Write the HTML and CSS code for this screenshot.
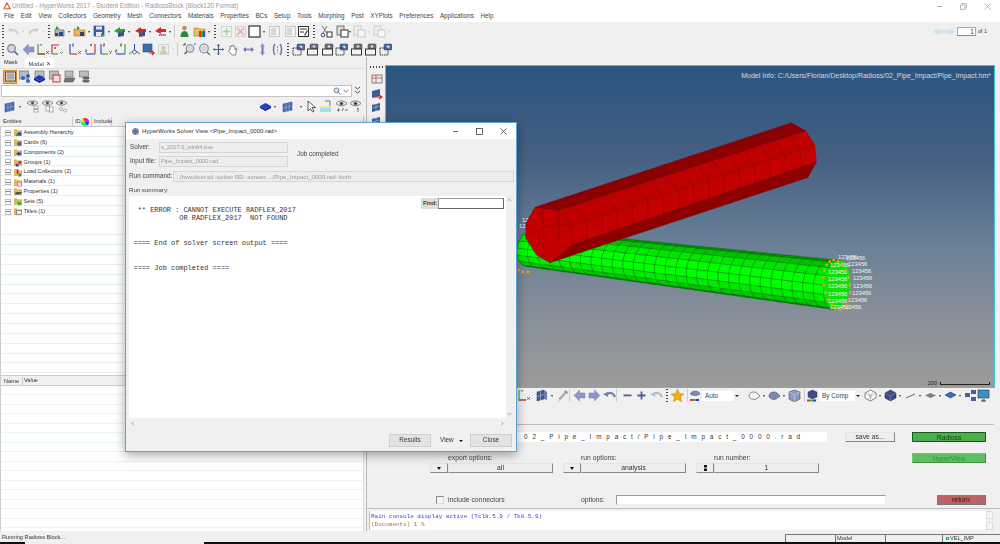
FILE: index.html
```html
<!DOCTYPE html>
<html lang="en">
<head>
<meta charset="utf-8">
<title>HyperWorks 2017</title>
<link rel="stylesheet" href="styles.css">
</head>
<body>
<svg class="sprite" width="0" height="0">
  <defs>
    <symbol id="undo" viewBox="0 0 13 13"><path d="M11 9C9 5 6 4 3 6" fill="none" stroke="#cfcfcf" stroke-width="2"/><path d="M1 4l4-1-1 5z" fill="#cfcfcf"/></symbol>
    <symbol id="redo" viewBox="0 0 13 13"><path d="M2 9c2-4 5-5 8-3" fill="none" stroke="#cfcfcf" stroke-width="2"/><path d="M12 4L8 3l1 5z" fill="#cfcfcf"/></symbol>
    <symbol id="folderg" viewBox="0 0 13 13"><path d="M2 4h4l1 1h4v6H2z" fill="#b0b8b0" stroke="#555" stroke-width=".6"/><path d="M3 1l3 2-3 2z" fill="#2fa52f"/><rect x="6" y="7" width="4" height="4" fill="#1f4fa0"/><rect x="2" y="8" width="3" height="3" fill="#444"/></symbol>
    <symbol id="foldero" viewBox="0 0 13 13"><path d="M1 4h4l1 1h6v6H1z" fill="#e9b556" stroke="#a87a20" stroke-width=".6"/><path d="M4 1l3 2-3 2z" fill="#2fa52f"/><rect x="7" y="7" width="4" height="4" fill="#3a3a8a"/></symbol>
    <symbol id="save" viewBox="0 0 13 13"><rect x="1" y="1" width="10" height="10" fill="#3d5fa8" stroke="#223b70" stroke-width=".6"/><rect x="3" y="1.500" width="6" height="3" fill="#dfe6f2"/><rect x="3" y="7" width="6" height="4" fill="#e9e9e9"/><path d="M8 8l4 2-4 2z" fill="#2fa52f"/></symbol>
    <symbol id="garrow" viewBox="0 0 13 13"><path d="M1 6l6-4v2h5v3H7v2z" fill="#2f9e2f"/><path d="M5 8l6-2v5l-6 1z" fill="#3f4f8f"/></symbol>
    <symbol id="rarrow" viewBox="0 0 13 13"><path d="M1 6l6-4v2h5v3H7v2z" fill="#d22a2a"/><path d="M5 8l6-2v5l-6 1z" fill="#3f4f8f"/></symbol>
    <symbol id="rarrowp" viewBox="0 0 13 13"><path d="M1 6l6-4v2h5v3H7v2z" fill="#d22a2a"/><path d="M5 10h7" stroke="#555" stroke-width="1.500" stroke-dasharray="1.500 .6"/></symbol>
    <symbol id="person" viewBox="0 0 13 13"><circle cx="6.500" cy="3" r="2.300" fill="#c88d45"/><path d="M2.500 12c0-4 1.500-6 4-6s4 2 4 6z" fill="#2b8a3a"/></symbol>
    <symbol id="rainbow" viewBox="0 0 13 13"><path d="M1 3h4l1 1h6v7H1z" fill="#e9c060" stroke="#a87a20" stroke-width=".6"/><rect x="6" y="6" width="2" height="6" fill="#e03030"/><rect x="8" y="6" width="2" height="6" fill="#30b030"/><rect x="10" y="6" width="2" height="6" fill="#3050e0"/></symbol>
    <symbol id="docplus" viewBox="0 0 13 13"><rect x="1.500" y="1.500" width="10" height="10" fill="#eef4ee" stroke="#cfd6cf"/><path d="M6.500 3v7M3 6.500h7" stroke="#a8d0a8" stroke-width="1.500"/></symbol>
    <symbol id="docx" viewBox="0 0 13 13"><rect x="1.500" y="1.500" width="10" height="10" fill="#f4eeee" stroke="#d6cfcf"/><path d="M3 3l7 7M10 3l-7 7" stroke="#e0a8a8" stroke-width="1.500"/></symbol>
    <symbol id="square" viewBox="0 0 13 13"><rect x="1" y="1" width="11" height="11" fill="#fff" stroke="#333" stroke-width="1.200"/></symbol>
    <symbol id="panel" viewBox="0 0 13 13"><rect x="1.500" y="1.500" width="10" height="10" fill="#f2f2f2" stroke="#c9c9c9"/><rect x="3" y="3" width="5" height="7" fill="#d8d8d8"/></symbol>
    <symbol id="note" viewBox="0 0 13 13"><rect x="1.500" y="1.500" width="10" height="10" fill="#fff" stroke="#333"/><path d="M3 4h7M3 7h4" stroke="#333"/><path d="M7 10l3-5 1 1-3 5z" fill="#555"/></symbol>
    <symbol id="scissors" viewBox="0 0 13 13"><path d="M2 1l5 7M7 1L3 8" stroke="#777" stroke-width="1"/><circle cx="3" cy="10" r="1.800" fill="none" stroke="#447"/><rect x="7" y="7" width="5" height="5" fill="#fff" stroke="#333"/></symbol>
    <symbol id="paste" viewBox="0 0 13 13"><rect x="1" y="1" width="7" height="9" fill="#ddd" stroke="#777"/><rect x="5" y="5" width="7" height="7" fill="#fff" stroke="#333"/></symbol>
    <symbol id="fadepaste" viewBox="0 0 13 13"><rect x="1" y="1" width="7" height="9" fill="#eee" stroke="#ccc"/><rect x="5" y="5" width="7" height="7" fill="#f8f8f8" stroke="#c8c8c8"/></symbol>
    <symbol id="mag" viewBox="0 0 13 13"><circle cx="5.500" cy="5.500" r="3.800" fill="#cfd8e4" stroke="#7a8796" stroke-width="1.300"/><path d="M8.500 8.500l3.500 3.500" stroke="#666" stroke-width="1.600"/></symbol>
    <symbol id="left" viewBox="0 0 13 13"><path d="M1 6.500L6.500 1v3H12v5H6.500v3z" fill="#8f95c6" stroke="#7a80ad" stroke-width=".5"/></symbol>
    <symbol id="right" viewBox="0 0 13 13"><path d="M12 6.500L6.500 1v3H1v5h5.500v3z" fill="#8f95c6" stroke="#7a80ad" stroke-width=".5"/></symbol>
    <symbol id="axyx" viewBox="0 0 13 13"><path d="M2 1v10h7" fill="none" stroke="#2ba02b" stroke-width="1.100"/><path d="M2 11h7" stroke="#d22" stroke-width="1.100"/><path d="M10 8l3 3M13 8l-3 3M4 1l1 1.500L6 1" stroke="#333" stroke-width=".6" fill="none"/></symbol>
    <symbol id="axxy" viewBox="0 0 13 13"><path d="M2 11V2h7" fill="none" stroke="#d22" stroke-width="1.100"/><path d="M2 11h6" stroke="#2ba02b" stroke-width="1.100"/><path d="M10 9l1.500 1.500L13 9M4 4l2 2M6 4L4 6" stroke="#333" stroke-width=".6" fill="none"/></symbol>
    <symbol id="axzx" viewBox="0 0 13 13"><path d="M2 1v10" stroke="#2a3fd0" stroke-width="1.100"/><path d="M2 11h7" stroke="#d22" stroke-width="1.100"/><path d="M4 1h2L4 3h2M10 8l3 3M13 8l-3 3" stroke="#333" stroke-width=".6" fill="none"/></symbol>
    <symbol id="axxz" viewBox="0 0 13 13"><path d="M11 1v10" stroke="#d22" stroke-width="1.100"/><path d="M2 11h9" stroke="#2a3fd0" stroke-width="1.100"/><path d="M6 1l2 2M8 1L6 3M1 7h2L1 9h2" stroke="#333" stroke-width=".6" fill="none"/></symbol>
    <symbol id="axzy" viewBox="0 0 13 13"><path d="M2 1v10" stroke="#2a3fd0" stroke-width="1.100"/><path d="M2 11h7" stroke="#2ba02b" stroke-width="1.100"/><path d="M4 1h2L4 3h2M10 8l1.500 1.500L13 8M11.500 9.500V11" stroke="#333" stroke-width=".6" fill="none"/></symbol>
    <symbol id="axyz" viewBox="0 0 13 13"><path d="M11 1v10" stroke="#2ba02b" stroke-width="1.100"/><path d="M2 11h9" stroke="#2a3fd0" stroke-width="1.100"/><path d="M6 1h2L6 3h2M1 7h2L1 9h2" stroke="#333" stroke-width=".6" fill="none"/></symbol>
    <symbol id="iso" viewBox="0 0 13 13"><path d="M6.500 1v6" stroke="#2a3fd0"/><path d="M6.500 7L1 11" stroke="#2ba02b"/><path d="M6.500 7L12 11" stroke="#d22"/><circle cx="6.500" cy="9" r="2" fill="none" stroke="#2a8a8a" stroke-width=".8"/></symbol>
    <symbol id="bluered" viewBox="0 0 13 13"><rect x="1" y="1" width="9" height="8" fill="#3c6da8" stroke="#264d80" stroke-width=".6"/><path d="M7 10h5M10 8l2 2-2 2" stroke="#d22" stroke-width="1.200" fill="none"/></symbol>
    <symbol id="fadeperson" viewBox="0 0 13 13"><rect x="1.500" y="1.500" width="10" height="10" fill="#e8eee8" stroke="#cdd6cd"/><circle cx="6.500" cy="5" r="2" fill="#bcd0bc"/><path d="M3 11c0-3 1.500-4 3.500-4s3.500 1 3.500 4z" fill="#d6c8a8"/></symbol>
    <symbol id="zoomplus" viewBox="0 0 13 13"><circle cx="7" cy="5.500" r="3.800" fill="#d8dde4" stroke="#7a8796" stroke-width="1.100"/><path d="M4 8.500L1.500 11" stroke="#555" stroke-width="1.400"/><path d="M1 3V1h2M11 1h2" stroke="#444" fill="none"/></symbol>
    <symbol id="zoomring" viewBox="0 0 13 13"><circle cx="6" cy="5.500" r="4.300" fill="none" stroke="#8a95a6" stroke-width="1.300"/><circle cx="6" cy="5.500" r="2" fill="#dfe3ea" stroke="#9aa4b2" stroke-width=".6"/><path d="M9 9l3 3" stroke="#777" stroke-width="1.500"/></symbol>
    <symbol id="cross" viewBox="0 0 13 13"><path d="M6.500 1v11M1 6.500h11" stroke="#4f5f8f" stroke-width="1.200"/><path d="M6.500 1L5 3h3zM6.500 12L5 10h3zM1 6.500L3 5v3zM12 6.500L10 5v3z" fill="#4f5f8f"/></symbol>
    <symbol id="hand" viewBox="0 0 13 13"><path d="M3 7V3.500c1-.5 1 0 1 .5V3c1-1 1.500 0 1.500 0V2.500c1-.5 1.200 0 1.200.5V3.500c1-.5 1.300 0 1.300.5v3l1-1.500c1-.5 1 .5.800 1L8.500 12H5L2 8.500c-.3-1 .5-1.500 1-1.500z" fill="#fff" stroke="#555" stroke-width=".7"/></symbol>
    <symbol id="horiz" viewBox="0 0 13 13"><path d="M1 6.500L4 4v5zM12 6.500L9 4v5z" fill="#6a74b0"/><rect x="4" y="5.500" width="5" height="2" fill="#8f95c6"/></symbol>
    <symbol id="vert" viewBox="0 0 13 13"><path d="M6.500 0L4 4h5zM6.500 13L4 9h5z" fill="#8f95c6"/><rect x="5.500" y="4" width="2" height="5" fill="#6a74b0"/></symbol>
    <symbol id="braces" viewBox="0 0 13 13"><path d="M4 1C2 3 2 10 4 12M9 1c2 2 2 9 0 11" fill="none" stroke="#6a74b0" stroke-width="1.500"/><path d="M6.500 3v7" stroke="#8f95c6" stroke-dasharray="2 1"/></symbol>
    <symbol id="cam" viewBox="0 0 13 13"><rect x="5" y="1" width="8" height="6" rx="1" fill="#4a6aa8" stroke="#333a66" stroke-width=".5"/><circle cx="9" cy="4" r="1.500" fill="#d8e0f0"/><rect x="1" y="5" width="8" height="7" fill="none" stroke="#333" stroke-width="1" stroke-dasharray="1.500 .7"/></symbol>
    <symbol id="cam2" viewBox="0 0 13 13"><rect x="4" y="1" width="8" height="5" rx="1" fill="#6b7280" stroke="#333" stroke-width=".5"/><circle cx="8" cy="3.500" r="1.300" fill="#dde"/><rect x="1.500" y="6" width="10" height="6" fill="#f3f3f3" stroke="#333"/></symbol>
    <symbol id="frontview" viewBox="0 0 13 13"><rect x="2" y="2" width="10" height="8" fill="#f2e8e8" stroke="#555" stroke-width=".7"/><path d="M2 5h10M6 2v8" stroke="#c33" stroke-width=".7"/></symbol>
    <symbol id="cubered" viewBox="0 0 13 13"><path d="M2 4l8-2v7l-8 2z" fill="#3f5a9a"/><path d="M5 10h6M9 8l3 2-3 2" stroke="#d22" stroke-width="1.200" fill="none"/></symbol>
    <symbol id="cube2" viewBox="0 0 13 13"><path d="M2 4l8-2v7l-8 2z" fill="#3f5a9a"/><path d="M2 7l8-2M6 3v7" stroke="#c9d2e6" stroke-width=".5"/></symbol>
    <symbol id="gbox" viewBox="0 0 13 13"><rect x="1.500" y="2" width="10" height="9" fill="#d8d8d8" stroke="#555"/><rect x="3" y="3.500" width="7" height="6" fill="#aaa"/></symbol>
    <symbol id="nodes" viewBox="0 0 13 13"><rect x="1.500" y="1" width="9" height="8" fill="#bbb" stroke="#666" stroke-width=".6"/><circle cx="5" cy="8" r="2" fill="#2e66c8"/><circle cx="10" cy="6" r="2" fill="#2e66c8"/><circle cx="10" cy="11" r="2" fill="#2e66c8"/></symbol>
    <symbol id="bluedisk" viewBox="0 0 13 13"><rect x="2" y="1" width="9" height="6" fill="#bbb" stroke="#666" stroke-width=".6"/><path d="M1 8l5.500-3L12 8l-5.500 3z" fill="#1c3cc8"/><path d="M1 8v2l5.500 3 5.500-3V8l-5.500 3z" fill="#12268c"/></symbol>
    <symbol id="matbox" viewBox="0 0 13 13"><rect x="1.500" y="1" width="9" height="8" fill="#bbb" stroke="#666" stroke-width=".6"/><rect x="5" y="5" width="7" height="7" fill="#f4dede" stroke="#c33"/></symbol>
    <symbol id="propbox" viewBox="0 0 13 13"><rect x="2" y="1" width="8" height="6" fill="#bbb" stroke="#666" stroke-width=".6"/><path d="M2 8h10l-2 4H1z" fill="#777" stroke="#444" stroke-width=".5"/></symbol>
    <symbol id="pile" viewBox="0 0 13 13"><rect x="1.500" y="1" width="9" height="6" fill="#bbb" stroke="#666" stroke-width=".6"/><ellipse cx="8" cy="8" rx="3.500" ry="1.500" fill="#666"/><ellipse cx="8" cy="11" rx="3.500" ry="1.500" fill="#666"/></symbol>
    <symbol id="compsheet" viewBox="0 0 13 13"><path d="M1 4l9-2v8l-9 2z" fill="#4a6db4" stroke="#2b4780" stroke-width=".5"/><path d="M4 3.500v8M7 3v8M1 8l9-2" stroke="#bcd" stroke-width=".4"/></symbol>
    <symbol id="eyec1" viewBox="0 0 13 13"><path d="M1 3c3-3 8-3 11 0-3 3-8 3-11 0z" fill="#d9dfe8" stroke="#555" stroke-width=".6"/><circle cx="6.500" cy="3" r="1.400" fill="#445"/><rect x="8" y="6" width="4" height="2.500" fill="#fff" stroke="#666" stroke-width=".5"/><rect x="8" y="9.500" width="4" height="2.500" fill="#fff" stroke="#666" stroke-width=".5"/></symbol>
    <symbol id="eyec2" viewBox="0 0 13 13"><path d="M1 3c3-3 8-3 11 0-3 3-8 3-11 0z" fill="#d9dfe8" stroke="#555" stroke-width=".6"/><circle cx="6.500" cy="3" r="1.400" fill="#445"/><rect x="5" y="6" width="3.500" height="5" fill="#fff" stroke="#666" stroke-width=".5"/><rect x="8.500" y="7" width="3.500" height="5" fill="#fff" stroke="#666" stroke-width=".5"/></symbol>
    <symbol id="eyec3" viewBox="0 0 13 13"><path d="M1 3c3-3 8-3 11 0-3 3-8 3-11 0z" fill="#d9dfe8" stroke="#555" stroke-width=".6"/><circle cx="6.500" cy="3" r="1.400" fill="#445"/><circle cx="6" cy="9" r="1.500" fill="#fff" stroke="#666" stroke-width=".5"/><circle cx="10" cy="10.500" r="1.500" fill="#fff" stroke="#666" stroke-width=".5"/></symbol>
    <symbol id="bluedia" viewBox="0 0 13 13"><path d="M1 6l5.500-3L12 6 6.500 9z" fill="#1c3cd8"/><path d="M1 6v2l5.500 3L12 8V6L6.500 9z" fill="#12268c"/></symbol>
    <symbol id="cursor" viewBox="0 0 13 13"><path d="M3 1v10l2.500-2.500L7.500 12l1.500-.8-2-3.700h3.500z" fill="#fff" stroke="#333" stroke-width=".8"/></symbol>
    <symbol id="highl" viewBox="0 0 13 13"><rect x="1" y="6" width="11" height="6" fill="#f3e98a"/><rect x="1" y="8" width="11" height="4" fill="#9fdff0"/><path d="M6 1h5v5" fill="none" stroke="#777"/></symbol>
    <symbol id="eyepm" viewBox="0 0 13 13"><path d="M1 3.500c3-3.500 8-3.500 11 0-3 3-8 3-11 0z" fill="#dfe6ee" stroke="#555" stroke-width=".7"/><circle cx="6.500" cy="3.500" r="1.600" fill="#334"/><path d="M2 10h3M3.500 8.500v3M7 11l1.500-3M10 10h3" stroke="#333" stroke-width=".7"/></symbol>
    <symbol id="eyeone" viewBox="0 0 13 13"><path d="M1 3.500c3-3.500 8-3.500 11 0-3 3-8 3-11 0z" fill="#dfe6ee" stroke="#555" stroke-width=".7"/><circle cx="6.500" cy="3.500" r="1.600" fill="#334"/><path d="M8 8.500l1-.5v4" stroke="#333" stroke-width=".7" fill="none"/></symbol>
    <symbol id="wrench" viewBox="0 0 13 13"><path d="M2 12l7-8" stroke="#aaa" stroke-width="2.400"/><path d="M8 2c2-1.500 4 0 4 2l-2 1-1.500-1.500z" fill="#999"/><circle cx="2.500" cy="11" r="1" fill="#fff"/></symbol>
    <symbol id="cubegrid" viewBox="0 0 13 13"><path d="M1 3l7-2v9l-7 2z" fill="#3e5a95" stroke="#2a3f70" stroke-width=".5"/><path d="M8 1l3 2v8l-3-1z" fill="#6f7fa8"/><path d="M4.500 2v9M1 7.500l7-2" stroke="#c9d2e6" stroke-width=".5"/></symbol>
    <symbol id="back" viewBox="0 0 13 13"><path d="M12 8C10 3 6 3 3 6" fill="none" stroke="#6f7fb0" stroke-width="2.200"/><path d="M0 5l5-2 0 5z" fill="#6f7fb0"/></symbol>
    <symbol id="backfade" viewBox="0 0 13 13"><path d="M12 8C10 3 6 3 3 6" fill="none" stroke="#b5bcd4" stroke-width="2.200"/><path d="M0 5l5-2 0 5z" fill="#b5bcd4"/></symbol>
    <symbol id="minus" viewBox="0 0 13 13"><rect x="2.500" y="5.500" width="8" height="1.800" fill="#4c5aa8"/></symbol>
    <symbol id="plus" viewBox="0 0 13 13"><path d="M6.500 2.500v8M2.500 6.500h8" stroke="#4c5aa8" stroke-width="1.800"/></symbol>
    <symbol id="star" viewBox="0 0 13 13"><path d="M6.500 0l2 4.500 4.500.5-3.400 3 1 4.700-4.100-2.400-4.100 2.400 1-4.700L0 5l4.500-.5z" fill="#e8b010" stroke="#a87a10" stroke-width=".4"/></symbol>
    <symbol id="autoic" viewBox="0 0 13 13"><path d="M1 5c2-4 9-4 10 0-3 2-7 2-10 0z" fill="#7a88b8" stroke="#445" stroke-width=".4"/><rect x="1" y="10" width="3" height="2" fill="#e33"/><rect x="4" y="10" width="3" height="2" fill="#3b3"/><rect x="7" y="10" width="3" height="2" fill="#33e"/></symbol>
    <symbol id="bycomp" viewBox="0 0 13 13"><path d="M2 3l4.500-2L11 3v5L6.500 10 2 8z" fill="#3d4f8a" stroke="#223" stroke-width=".4"/><rect x="1" y="10.500" width="3" height="2" fill="#e33"/><rect x="4" y="10.500" width="3" height="2" fill="#3b3"/><rect x="7" y="10.500" width="3" height="2" fill="#33e"/></symbol>
    <symbol id="shell" viewBox="0 0 13 13"><path d="M1 7c0-4 5-5 8-3l3 3-4 3c-3 1-6 0-7-3z" fill="#f6f6f6" stroke="#666" stroke-width=".8"/></symbol>
    <symbol id="shell2" viewBox="0 0 13 13"><path d="M1 7c0-4 5-5 8-3l3 3-4 3c-3 1-6 0-7-3z" fill="#7a8ab0" stroke="#445" stroke-width=".6"/></symbol>
    <symbol id="boxc" viewBox="0 0 13 13"><path d="M1 3l5.500-2L12 3v7l-5.500 3L1 10z" fill="#8a9ac0" stroke="#333" stroke-width=".5"/><path d="M1 3l5.500 3L12 3M6.500 6v7" stroke="#dde" stroke-width=".5" fill="none"/></symbol>
    <symbol id="wire" viewBox="0 0 13 13"><path d="M1 4l5.500-3L12 4v5l-5.500 3L1 9z" fill="#fff" stroke="#555" stroke-width=".7"/><path d="M1 4l5.500 3L12 4M6.500 7v5M3.500 2.500l5.500 8M9.500 2.500l-6 8" stroke="#888" stroke-width=".5" fill="none"/></symbol>
    <symbol id="solid" viewBox="0 0 13 13"><path d="M1 4l5.500-3L12 4v5l-5.500 3L1 9z" fill="#3a4a88" stroke="#223" stroke-width=".5"/><path d="M1 4l5.500 3L12 4M6.500 7v5" stroke="#99a" stroke-width=".5" fill="none"/></symbol>
    <symbol id="line1" viewBox="0 0 13 13"><path d="M2 9l9-4" stroke="#666" stroke-width="1"/></symbol>
    <symbol id="flat" viewBox="0 0 13 13"><path d="M1 6.500l5.500-2.500L12 6.500 6.500 9z" fill="#7a7f88"/></symbol>
    <symbol id="flatb" viewBox="0 0 13 13"><path d="M1 6l5.500-3L12 6 6.500 9z" fill="#2e6fd8" stroke="#223" stroke-width=".5"/></symbol>
    <symbol id="cubes" viewBox="0 0 13 13"><rect x="7" y="1" width="5" height="4" fill="#4a5fa0"/><rect x="1" y="4" width="5" height="4" fill="#4a5fa0"/><rect x="7" y="8" width="5" height="4" fill="#4a5fa0"/></symbol>
    <symbol id="monitor" viewBox="0 0 13 13"><rect x="1" y="1" width="11" height="8" fill="#3a8fc8" stroke="#333" stroke-width=".6"/><path d="M5 11h3M4 12h5" stroke="#333"/></symbol>
    <symbol id="fold" viewBox="0 0 9 9"><path d="M0 1.500h3l1 1h5V8H0z" fill="#e8b85c" stroke="#b08030" stroke-width=".4"/></symbol>
  </defs>
</svg>

<div class="app">
  <header class="titlebar">
    <svg class="applogo" viewBox="0 0 9 9"><path d="M4.500 1L8 7.500H1z" fill="none" stroke="#e04030" stroke-width="1.200"/><path d="M1 7.500h3" stroke="#e8b030" stroke-width="1.200"/></svg>
    <span class="titletext">Untitled - HyperWorks 2017 - Student Edition - RadiossBlock (Block120 Format)</span>
    <div class="winctl">
      <svg viewBox="0 0 9 9"><path d="M2 4.500h5" stroke="#aaa"/></svg>
      <svg viewBox="0 0 9 9"><path d="M1.500 3h4.500v4.500H1.500zM3 3V1.500h4.500V6H6" fill="none" stroke="#aaa" stroke-width=".8"/></svg>
      <svg viewBox="0 0 9 9"><path d="M1.500 1.500l6 6M7.500 1.500l-6 6" stroke="#aaa" stroke-width=".8"/></svg>
    </div>
  </header>

  <nav class="menubar">
    <span>File</span><span>Edit</span><span>View</span><span>Collectors</span><span>Geometry</span><span>Mesh</span><span>Connectors</span><span>Materials</span><span>Properties</span><span>BCs</span><span>Setup</span><span>Tools</span><span>Morphing</span><span>Post</span><span>XYPlots</span><span>Preferences</span><span>Applications</span><span>Help</span>
  </nav>

  <div class="toolbar tb1">
    <i class="dots"></i>
    <svg class="ic s3"><use href="#undo"/></svg><i class="ar fade"></i>
    <svg class="ic"><use href="#redo"/></svg><i class="ar fade"></i>
    <i class="dots s1"></i>
    <svg class="ic s3"><use href="#folderg"/></svg><i class="ar"></i>
    <svg class="ic"><use href="#foldero"/></svg><i class="ar"></i>
    <svg class="ic"><use href="#save"/></svg><i class="ar"></i>
    <svg class="ic"><use href="#garrow"/></svg><i class="ar"></i>
    <svg class="ic s1"><use href="#rarrow"/></svg><i class="ar"></i>
    <svg class="ic"><use href="#rarrowp"/></svg><i class="ar"></i>
    <i class="sep"></i>
    <svg class="ic s3"><use href="#person"/></svg>
    <svg class="ic s2"><use href="#rainbow"/></svg><i class="ar"></i>
    <i class="dots s1"></i>
    <svg class="ic s4"><use href="#docplus"/></svg>
    <svg class="ic s1"><use href="#docx"/></svg>
    <svg class="ic s1"><use href="#square"/></svg><i class="ar"></i>
    <svg class="ic"><use href="#panel"/></svg>
    <svg class="ic s3"><use href="#panel"/></svg>
    <svg class="ic"><use href="#note"/></svg>
    <i class="dots s3"></i>
    <svg class="ic s5"><use href="#scissors"/></svg>
    <svg class="ic s3"><use href="#paste"/></svg><i class="ar nar"></i>
    <svg class="ic"><use href="#fadepaste"/></svg><i class="ar fade"></i>
    <svg class="ic"><use href="#fadepaste"/></svg><i class="ar fade"></i>
    <div class="pager">
      <svg class="pagearrow" viewBox="0 0 11 9"><path d="M0 4.500L5 .5v2h6v4H5v2z" fill="#cfe4ee"/></svg>
      <svg class="pagearrow" viewBox="0 0 11 9"><path d="M11 4.500L6 .5v2H0v4h6v2z" fill="#cfe4ee"/></svg>
      <span class="pageinput">1</span><span class="pageof">of 1</span>
    </div>
  </div>

  <div class="toolbar tb2">
    <i class="dots"></i>
    <svg class="ic s2"><use href="#mag"/></svg>
    <svg class="ic s3"><use href="#left"/></svg>
    <svg class="ic s1"><use href="#axyx"/></svg>
    <svg class="ic s1"><use href="#axxy"/></svg>
    <svg class="ic s5"><use href="#axzx"/></svg>
    <svg class="ic s3"><use href="#axxz"/></svg>
    <svg class="ic s2"><use href="#axzy"/></svg>
    <svg class="ic s2"><use href="#axyz"/></svg>
    <svg class="ic s1"><use href="#iso"/></svg>
    <svg class="ic s1"><use href="#bluered"/></svg>
    <svg class="ic s2"><use href="#fadeperson"/></svg><i class="ar fade"></i>
    <i class="sep"></i>
    <svg class="ic s5"><use href="#zoomplus"/></svg>
    <svg class="ic s2"><use href="#zoomring"/></svg>
    <svg class="ic s1"><use href="#cross"/></svg>
    <svg class="ic s2"><use href="#hand"/></svg>
    <svg class="ic s2"><use href="#horiz"/></svg>
    <svg class="ic s1"><use href="#vert"/></svg>
    <svg class="ic s2"><use href="#braces"/></svg>
    <i class="dots s3"></i>
    <svg class="ic s3"><use href="#cam"/></svg>
    <svg class="ic s1"><use href="#cam2"/></svg>
    <svg class="ic s2"><use href="#cam2"/></svg>
    <svg class="ic s1"><use href="#cam"/></svg>
    <svg class="ic s2"><use href="#cam2"/></svg>
    <svg class="ic s1"><use href="#cam2"/></svg>
    <svg class="ic s2"><use href="#cam"/></svg>
  </div>

  <main class="main">
    <section class="leftpanel">
      <div class="tabs">
        <span class="tab">Mask</span>
        <span class="tab active">Model <b class="tabx">×</b></span>
      </div>
      <div class="pickrow">
        <span class="pick selected"><svg class="ic"><use href="#gbox"/></svg></span>
        <svg class="ic"><use href="#nodes"/></svg>
        <svg class="ic s1"><use href="#bluedisk"/></svg>
        <svg class="ic s1"><use href="#matbox"/></svg>
        <svg class="ic s1"><use href="#propbox"/></svg>
        <svg class="ic s1"><use href="#pile"/></svg>
      </div>
      <div class="searchrow">
        <div class="searchbox">
          <svg class="searchic" viewBox="0 0 9 9"><circle cx="3.800" cy="3.800" r="2.800" fill="#cfe0f0" stroke="#5a7aa0"/><path d="M6 6l2.500 2.500" stroke="#555"/></svg>
          <svg class="searchic" viewBox="0 0 9 9"><path d="M2 3l2.500 3L7 3" fill="none" stroke="#777"/></svg>
        </div>
        <svg class="dbl" viewBox="0 0 7 9"><path d="M1 1l2.500 2L6 1M1 5l2.500 2L6 5" fill="none" stroke="#555"/></svg>
      </div>
      <div class="entbar">
        <svg class="ic"><use href="#compsheet"/></svg><i class="ar"></i>
        <svg class="ic s2"><use href="#eyec1"/></svg>
        <svg class="ic s2"><use href="#eyec2"/></svg>
        <svg class="ic s1"><use href="#eyec3"/></svg>
        <span class="grow"></span>
        <svg class="ic"><use href="#bluedia"/></svg><i class="ar"></i>
        <svg class="ic s3"><use href="#compsheet"/></svg><i class="ar s3"></i>
        <svg class="ic"><use href="#cursor"/></svg>
        <svg class="ic s1"><use href="#highl"/></svg>
        <svg class="ic s3"><use href="#eyepm"/></svg>
        <svg class="ic s1"><use href="#eyeone"/></svg>
      </div>
      <div class="enthead">
        <span class="h-ent">Entities</span>
        <span class="h-id">ID</span>
        <span class="wheel"></span>
        <span class="h-inc">Include</span>
      </div>
      <ul class="tree">
        <li><i class="exp"></i><svg class="fic" viewBox="0 0 9 9"><use href="#fold" width="9" height="9"/><rect x="4" y="4.500" width="4" height="3.500" fill="#2a3fa0"/><rect x="2" y="6" width="3" height="2.500" fill="#3aa03a"/></svg>Assembly Hierarchy</li>
        <li><i class="exp"></i><svg class="fic" viewBox="0 0 9 9"><use href="#fold" width="9" height="9"/><circle cx="6" cy="6" r="2.500" fill="#666"/></svg>Cards (6)</li>
        <li><i class="exp"></i><svg class="fic" viewBox="0 0 9 9"><use href="#fold" width="9" height="9"/><path d="M2 6l3.500-2L9 6 5.500 8z" fill="#1c3cd8"/></svg>Components (2)</li>
        <li><i class="exp"></i><svg class="fic" viewBox="0 0 9 9"><use href="#fold" width="9" height="9"/><rect x="5" y="3" width="3" height="3" fill="#d22"/><rect x="2" y="6" width="3" height="3" fill="#2a3fa0"/></svg>Groups (1)</li>
        <li><i class="exp"></i><svg class="fic" viewBox="0 0 9 9"><use href="#fold" width="9" height="9"/><rect x="3" y="1" width="2" height="5" fill="#d22"/><rect x="5" y="6" width="3" height="3" fill="#2aa02a"/></svg>Load Collectors (2)</li>
        <li><i class="exp"></i><svg class="fic" viewBox="0 0 9 9"><use href="#fold" width="9" height="9"/><rect x="4" y="4" width="4" height="5" fill="#f4dede" stroke="#c33" stroke-width=".5"/></svg>Materials (1)</li>
        <li><i class="exp"></i><svg class="fic" viewBox="0 0 9 9"><use href="#fold" width="9" height="9"/><path d="M2 5h7l-2 3H1z" fill="#555"/></svg>Properties (1)</li>
        <li><i class="exp"></i><svg class="fic" viewBox="0 0 9 9"><use href="#fold" width="9" height="9"/><circle cx="5" cy="6" r="1.500" fill="#18c018"/><circle cx="7" cy="7" r="1.500" fill="#18c018"/><circle cx="5.500" cy="8" r="1" fill="#18c018"/></svg>Sets (5)</li>
        <li><i class="exp"></i><svg class="fic" viewBox="0 0 9 9"><use href="#fold" width="9" height="9"/><rect x="3" y="3.500" width="5.500" height="4" fill="#eee" stroke="#444" stroke-width=".5"/></svg>Titles (1)</li>
      </ul>
      <div class="valhead"><span class="h-name">Name</span><span>Value</span></div>
      <div class="valtable"></div>
    </section>

    <i class="splitter"></i>

    <section class="rightcol">
      <div class="viewrow">
        <div class="sidebar">
          <i class="hdots"></i>
          <svg class="ic"><use href="#frontview"/></svg>
          <svg class="ic"><use href="#cubered"/></svg>
          <svg class="ic"><use href="#cube2"/></svg>
          <svg class="ic"><use href="#cube2"/></svg>
        </div>
        <div class="viewport">
          <svg id="scene" class="scene" viewBox="385 65 610 323"></svg>
          <div class="modelinfo">Model Info: C:/Users/Florian/Desktop/Radioss/02_Pipe_Impact/Pipe_Impact.hm*</div>
          <div class="scalebar"><span>200</span><i></i></div>
        </div>
      </div>

      <div class="viewtools">
        <svg class="ic"><use href="#axyx"/></svg>
        <svg class="ic s6"><use href="#cubegrid"/></svg><i class="ar"></i>
        <svg class="ic"><use href="#wrench"/></svg>
        <i class="sep"></i>
        <svg class="ic s3"><use href="#left"/></svg>
        <svg class="ic s2"><use href="#right"/></svg>
        <svg class="ic s2"><use href="#back"/></svg>
        <i class="sep"></i>
        <svg class="ic s4"><use href="#minus"/></svg>
        <svg class="ic s1"><use href="#plus"/></svg>
        <svg class="ic s2"><use href="#backfade"/></svg>
        <i class="dots s3"></i>
        <svg class="ic s3"><use href="#star"/></svg>
        <i class="sep s3"></i>
        <svg class="ic s1"><use href="#autoic"/></svg>
        <span class="vselect w1">Auto</span><i class="selarrow"></i>
        <svg class="ic s7"><use href="#shell"/></svg><i class="ar"></i>
        <svg class="ic"><use href="#shell2"/></svg><i class="ar"></i>
        <svg class="ic"><use href="#boxc"/></svg>
        <i class="sep s3"></i>
        <svg class="ic s1"><use href="#bycomp"/></svg>
        <span class="vselect w2">By Comp</span><i class="selarrow"></i>
        <svg class="ic s2"><use href="#wire"/></svg><i class="ar"></i>
        <svg class="ic"><use href="#solid"/></svg><i class="ar"></i>
        <svg class="ic"><use href="#line1"/></svg><i class="ar"></i>
        <svg class="ic"><use href="#flat"/></svg><i class="ar"></i>
        <svg class="ic"><use href="#flatb"/></svg><i class="ar"></i>
        <svg class="ic"><use href="#cubes"/></svg>
        <svg class="ic"><use href="#monitor"/></svg>
      </div>

      <div class="form">
        <div class="formrow filerow">
          <div class="fileinput">02_Pipe_Impact/Pipe_Impact_0000.rad</div>
          <button class="btn3d saveas">save as...</button>
          <button class="action radioss">Radioss</button>
        </div>
        <div class="formrow optrow">
          <div class="optgroup">
            <label>export options:</label>
            <div class="optctl"><button class="btn3d arrowbtn"><i class="tri"></i></button><button class="btn3d field">all</button></div>
          </div>
          <div class="optgroup">
            <label>run options:</label>
            <div class="optctl"><button class="btn3d arrowbtn"><i class="tri"></i></button><button class="btn3d field">analysis</button></div>
          </div>
          <div class="optgroup">
            <label>run number:</label>
            <div class="optctl"><button class="btn3d arrowbtn"><i class="updown"></i></button><button class="btn3d field">1</button></div>
          </div>
          <button class="action hyperview">HyperView</button>
        </div>
        <div class="formrow lastrow">
          <span class="check"></span><span class="checklabel">include connectors</span>
          <span class="optlabel">options:</span>
          <div class="optinput"></div>
          <button class="action ret">return</button>
        </div>
      </div>

      <div class="console">
        <div class="consoletext"><div class="c-blue">Main console display active (Tcl8.5.9 / Tk8.5.9)</div><div class="c-red">(Documents) 1 %</div></div>
        <div class="conscroll"><i></i><i></i></div>
      </div>
    </section>
  </main>

  <footer class="statusbar">
    <span class="statusmsg">Running Radioss Block...</span>
    <span class="cell c1"></span><span class="cell c2">Model</span><span class="cell c3"></span>
    <span class="cell c4"><i class="cyan"></i>VEL_IMP</span>
  </footer>
  <div class="taskstrip"><i></i></div>
</div>

<div class="dialog">
  <div class="dlgtitle">
    <svg class="dlgicon" viewBox="0 0 9 9"><circle cx="4.500" cy="4.500" r="3.500" fill="#8a93b8"/><path d="M1 4.500h7M4.500 1v7M2 2l5 5M7 2L2 7" stroke="#4a5280" stroke-width=".5"/></svg>
    <span>HyperWorks Solver View &lt;Pipe_Impact_0000.rad&gt;</span>
    <div class="dlgctl">
      <svg viewBox="0 0 9 9"><path d="M2 4.500h5" stroke="#444" stroke-width=".8"/></svg>
      <svg viewBox="0 0 9 9"><rect x="1.500" y="1.500" width="6" height="6" fill="none" stroke="#444" stroke-width=".8"/></svg>
      <svg viewBox="0 0 9 9"><path d="M1.500 1.500l6 6M7.500 1.500l-6 6" stroke="#444" stroke-width=".8"/></svg>
    </div>
  </div>
  <div class="dlgbody">
    <div class="solverrow">
      <div class="solverfields">
        <div class="frow"><label>Solver:</label><div class="ro">s_2017.0_win64.exe</div></div>
        <div class="frow"><label>Input file:</label><div class="ro">Pipe_Impact_0000.rad</div></div>
      </div>
      <div class="jobstate">Job completed</div>
    </div>
    <div class="cmdrow"><label>Run command:</label><div class="ro wide">.../hwsolver.tcl -solver RD -screen .../Pipe_Impact_0000.rad -both</div></div>
    <div class="sumlabel">Run summary:</div>
    <div class="summary">
      <pre class="log"> ** ERROR : CANNOT EXECUTE RADFLEX_2017
           OR RADFLEX_2017  NOT FOUND


==== End of solver screen output ====


==== Job completed ====</pre>
      <div class="find"><span>Find:</span><div class="findinput"></div></div>
      <div class="vscroll"><i class="chev up"></i><i class="chev down"></i></div>
    </div>
    <div class="hscroll"><i class="chev lft"></i><i class="chev rgt"></i></div>
    <div class="dlgfoot">
      <button class="dlgbtn">Results</button>
      <span class="viewmenu">View<i class="tri small"></i></span>
      <button class="dlgbtn">Close</button>
    </div>
  </div>
</div>
<script src="app.js"></script>
</body>
</html>
```
FILE: styles.css
```css
* { box-sizing: border-box; }
html, body { margin: 0; padding: 0; }
body {
  width: 1000px; height: 544px; overflow: hidden; position: relative;
  background: #f0f0f0; color: #333;
  font-family: "Liberation Sans", Arial, sans-serif; font-size: 6.4px; line-height: 1;
  filter: blur(.35px);
}
i { display: block; font-style: normal; }
ul { list-style: none; margin: 0; padding: 0; }
button { font: inherit; color: inherit; margin: 0; padding: 0; border: 0; background: none; }
label { display: block; }
.sprite { position: absolute; }
.app { display: flex; flex-direction: column; width: 1000px; height: 544px; }

.titlebar { height: 11px; background: #fff; display: flex; align-items: center; color: #9a9a9a; padding: 1px 0 0 3px; }
.applogo { width: 8px; height: 8px; margin-right: 1px; }
.titletext { font-size: 6.4px; }
.winctl { margin-left: auto; display: flex; gap: 15px; padding-right: 8px; }
.winctl svg { width: 9px; height: 9px; }

.menubar { height: 11px; background: #fff; display: flex; align-items: center; padding-left: 4px; gap: 6.6px; color: #444; font-size: 6.3px; }

.toolbar { display: flex; align-items: center; padding-left: 2px; background: #f0f0f0; }
.tb1 { height: 19px; }
.tb2 { height: 16px; }
.ic { width: 13px; height: 13px; flex: none; }
.ar { width: 7px; height: 2px; flex: none; position: relative; }
.ar::after { content: ""; position: absolute; left: 2px; top: 0; border: 1.5px solid transparent; border-top: 2px solid #333; border-bottom: 0; }
.ar.fade::after { border-top-color: #ccc; }
.nar { width: 4px; }
.nar::after { left: 0; }
.dots { width: 2px; height: 13px; flex: none; background: repeating-linear-gradient(#444 0 1px, transparent 1px 3px); }
.sep { width: 1px; height: 13px; flex: none; background: #ccc; }
.s1 { margin-left: 1px; } .s2 { margin-left: 2px; } .s3 { margin-left: 3px; } .s4 { margin-left: 4px; } .s5 { margin-left: 5px; } .s6 { margin-left: 6px; } .s7 { margin-left: 7px; }

.pager { margin-left: auto; display: flex; align-items: center; gap: 0; padding-right: 13px; color: #333; }
.pagearrow { width: 11px; height: 9px; }
.pageinput { width: 19px; height: 9px; margin-left: 2px; background: #fff; border: 1px solid #aaa; border-bottom-color: #888; text-align: right; padding-right: 1px; line-height: 7px; color: #333; }
.pageof { margin-left: 2px; font-size: 5.500px; }

.main { height: 474px; display: flex; }
.leftpanel { width: 364px; display: flex; flex-direction: column; font-size: 5.650px; }
.splitter { width: 3px; border-right: 1px solid #bbb; flex: none; }
.tabs { height: 11px; display: flex; align-items: flex-end; padding-left: 2px; }
.tab { height: 10px; padding: 2px 3px 0 2px; }
.tab.active { background: #fff; width: 29px; margin-left: 5px; padding-left: 3px; }
.tabx { font-weight: 400; font-size: 7px; margin-left: 1px; }
.pickrow { height: 16px; display: flex; align-items: center; gap: 1px; padding-left: 3px; background: #f0f0f0; border-top: 1px solid #ddd; }
.pick.selected { background: #f0b060; border: 1px solid #d08a30; width: 14px; height: 14px; display: flex; align-items: center; justify-content: center; }
.searchrow { height: 13px; display: flex; align-items: center; padding-left: 1px; }
.searchbox { width: 351px; height: 12px; background: #fff; border: 1px solid #c4c4c4; display: flex; justify-content: flex-end; align-items: center; gap: 1px; padding-right: 1px; }
.searchic { width: 8px; height: 8px; }
.dbl { width: 7px; height: 9px; margin-left: 2px; }
.entbar { height: 19px; display: flex; align-items: center; padding: 0 2px 0 4px; }
.grow { flex: 1; }
.enthead { height: 11px; display: flex; align-items: center; background: #f0f0f0; border-bottom: 1px solid #c8c8c8; border-right: 1px solid #c8c8c8; padding: 1px 0 0 3px; }
.h-ent { width: 70px; border-right: 1px solid #ccc; height: 9px; line-height: 9px; flex: none; }
.h-id { width: 8px; padding-left: 2px; height: 9px; line-height: 9px; flex: none; }
.wheel { width: 8px; height: 8px; border-radius: 50%; flex: none; margin-right: 2px; background: conic-gradient(#e22, #e2e, #22e, #2ee, #2e2, #ee2, #e22); }
.h-inc { width: 21px; padding-left: 2px; border-left: 1px solid #ccc; border-right: 1px solid #ccc; height: 9px; line-height: 9px; flex: none; }
.tree { height: 248px; background: #fff repeating-linear-gradient(#fff 0 8.85px, #e6f1f5 8.85px 9.85px); padding: 1px 0 0 4px; border-right: 1px solid #ddd; border-left: 1px solid #ccc; }
.tree li { height: 9.85px; display: flex; align-items: center; color: #333; }
.exp { width: 6px; height: 6px; border: 1px solid #bbb; background: linear-gradient(#888,#888) center/4px 1px no-repeat; margin-right: 3px; flex: none; }
.fic { width: 8px; height: 9px; margin-right: 1.500px; flex: none; }
.valhead { height: 11px; display: flex; align-items: center; padding: 1px 0 0 3px; background: #f0f0f0; border-top: 1px solid #ccc; border-bottom: 1px solid #ccc; border-left: 1px solid #ccc; }
.h-name { width: 19px; border-right: 1px solid #ccc; margin-right: 1px; line-height: 8px; }
.valtable { flex: 1; background: #fff repeating-linear-gradient(#fff 0 8.500px, #e9f4f7 8.500px 9.500px); border-left: 1px solid #ccc; border-right: 1px solid #ddd; }

.rightcol { flex: 1; display: flex; flex-direction: column; min-width: 0; }
.viewrow { height: 331px; display: flex; padding: 8px 5px 0 0; }
.sidebar { width: 18px; display: flex; flex-direction: column; align-items: center; padding-top: 1px; gap: 1px; flex: none; }
.hdots { width: 13px; height: 2px; margin-bottom: 4px; background: repeating-linear-gradient(90deg, #444 0 1px, transparent 1px 3px); }
.viewport { flex: 1; position: relative; border: 1px solid #3fc4d8; background: linear-gradient(#2b557f, #445f82 28%, #6a7f96 55%, #8d9299 82%, #9b9b9b); overflow: hidden; }
.scene { position: absolute; left: -1px; top: -1px; width: 610px; height: 323px; }
.modelinfo { position: absolute; right: 3px; top: 6px; color: #d3dbe4; font-size: 7px; }
.scalebar { position: absolute; right: 4px; bottom: 1px; display: flex; align-items: center; gap: 3px; color: #222; font-size: 5.500px; }
.scalebar i { width: 50px; height: 3px; border: 1px solid #222; border-top: 0; }

.viewtools { height: 15px; display: flex; align-items: center; padding-left: 150px; }
.vselect { background: #fff; height: 10px; line-height: 10px; padding-left: 3px; flex: none; color: #444; }
.vselect.w1 { width: 32px; }
.vselect.w2 { width: 36px; }
.selarrow { width: 7px; height: 10px; flex: none; background: #eee; position: relative; }
.selarrow::after { content: ""; position: absolute; left: 1px; top: 4px; border: 2px solid transparent; border-top: 2.500px solid #222; border-bottom: 0; }

.form { height: 105px; margin: 0 6px 0 0; display: flex; flex-direction: column; padding-top: 21px; font-size: 6.800px; background: linear-gradient(#bdbdbd,#bdbdbd) 0 21px/100% 1px no-repeat; }
.formrow { display: flex; }
.filerow { margin-top: 8px; height: 10px; padding-left: 33px; }
.fileinput { width: 427px; height: 10px; background: #fff; text-align: right; padding-right: 22px; font-size: 6.400px; letter-spacing: 4.820px; line-height: 10px; color: #333; white-space: nowrap; overflow: hidden; flex: none; }
.btn3d { background: #eee; border: 1px solid; border-color: #e4e4e4 #888 #888 #e4e4e4; text-align: center; flex: none; }
.saveas { width: 50px; margin-left: 18px; height: 10px; line-height: 8px; }
.action { text-align: center; height: 10px; line-height: 9px; flex: none; }
.radioss { width: 74px; margin-left: 17px; background: #4bb04b; border: 1px solid #155a20; color: #1a3a1a; }
.optrow { margin-top: 11px; height: 20px; padding-left: 63px; gap: 10px; }
.optgroup { width: 123px; flex: none; }
.optgroup label { height: 10px; line-height: 9px; padding-left: 18px; color: #444; }
.optctl { display: flex; height: 10px; }
.arrowbtn { width: 18px; height: 10px; display: flex; align-items: center; justify-content: center; }
.field { width: 105px; height: 10px; line-height: 8px; }
.tri { width: 0; height: 0; border-left: 2.500px solid transparent; border-right: 2.500px solid transparent; border-top: 3px solid #111; }
.updown { width: 3px; height: 6px; background: linear-gradient(#111 0 2px, #888 2px 4px, #111 4px); }
.hyperview { width: 74px; margin-left: 83px; background: #5dbf60; color: #3f8f42; border: 1px solid #7ac47a; border-bottom-color: #3f8f42; border-right-color: #3f8f42; }
.lastrow { margin-top: 22px; height: 10px; align-items: center; padding-left: 69px; }
.check { width: 8px; height: 8px; background: #f5f5f5; border: 1px solid #888; border-bottom-color: #ddd; border-right-color: #ddd; flex: none; }
.checklabel { margin-left: 4px; width: 133px; flex: none; color: #444; }
.optlabel { width: 35px; flex: none; color: #444; }
.optinput { width: 270px; height: 10px; background: #fff; border: 1px solid #999; border-bottom-color: #eee; border-right-color: #eee; flex: none; }
.ret { width: 49px; margin-left: 51px; background: #c06060; color: #222; height: 10px; border-right: 1px solid #777; border-bottom: 1px solid #777; }
.console { flex: 1; display: flex; padding: 3px 0 0 2px; background: linear-gradient(#bdbdbd,#bdbdbd) 0 0/100% 1px no-repeat; }
.consoletext { width: 617px; height: 19px; background: #fff; border-left: 1px solid #bbb; font-family: "Liberation Mono", monospace; font-size: 5.950px; line-height: 8px; padding: 2px 0 0 1px; white-space: pre; }
.c-blue { color: #4040e8; }
.c-red { color: #b06a50; }
.conscroll { width: 8px; display: flex; flex-direction: column; gap: 3px; }
.conscroll i { width: 7px; height: 8px; background: #f4f4f4; border: 1px solid #ddd; }

.statusbar { height: 11px; display: flex; align-items: center; background: #f0f0f0; padding-top: 2px; font-size: 5.650px; }
.statusmsg { flex: 1; padding-left: 2px; }
.cell { height: 8px; line-height: 7px; border: 1px solid #777; border-right: 0; border-bottom: 0; padding-left: 1px; flex: none; }
.c1, .c2 { width: 50px; }
.c3 { width: 57px; }
.c4 { width: 58px; display: flex; align-items: center; }
.cyan { width: 3px; height: 3px; border: 1px solid #1aa0b0; margin: 0 1px 0 2px; }
.taskstrip { height: 2px; background: #111; padding-left: 25px; }
.taskstrip i { width: 179px; height: 2px; background: #eee; }

.dialog { position: absolute; left: 125px; top: 122px; width: 392px; height: 330px; border: 1px solid #57a3d6; background: #f0f0f0; box-shadow: 0 3px 10px rgba(0,0,0,.35); display: flex; flex-direction: column; }
.dlgtitle { height: 16px; background: #fff; display: flex; align-items: center; padding-left: 5px; color: #333; font-size: 6px; flex: none; }
.dlgicon { width: 9px; height: 9px; margin-right: 2px; }
.dlgctl { margin-left: auto; display: flex; gap: 15px; padding-right: 8px; }
.dlgctl svg { width: 9px; height: 9px; }
.dlgbody { flex: 1; padding: 3px 2px 0 3px; display: flex; flex-direction: column; min-height: 0; }
.solverrow { display: flex; align-items: center; }
.solverfields { display: flex; flex-direction: column; gap: 3px; }
.frow { display: flex; align-items: center; }
.frow label { width: 30px; color: #444; padding-left: 1px; }
.ro { width: 129px; height: 11px; line-height: 9px; background: #ededed; border: 1px solid #d6d6d6; color: #999; padding-left: 1px; white-space: nowrap; font-size: 5.700px; }
.jobstate { margin-left: 9px; color: #444; }
.cmdrow { display: flex; align-items: center; margin-top: 4px; }
.cmdrow label { width: 44px; color: #444; }
.ro.wide { width: 341px; font-size: 6.100px; }
.sumlabel { height: 14px; padding-top: 5px; color: #444; font-size: 6.100px; }
.summary { height: 222px; background: #fff; position: relative; flex: none; }
.log { margin: 0; padding: 10px 0 0 4.500px; font-family: "Liberation Mono", monospace; font-size: 6.950px; line-height: 8.330px; color: #333; }
.find { position: absolute; left: 292px; top: 2px; display: flex; height: 11px; background: #ddd; }
.find span { width: 17px; line-height: 11px; padding-left: 2px; color: #333; font-weight: 700; font-size: 5.800px; }
.findinput { width: 66px; height: 11px; background: #fff; border: 1px solid #999; border-right-color: #666; border-bottom-color: #666; }
.vscroll { position: absolute; right: 0; top: 0; bottom: 0; width: 8px; background: #f0f0f0; display: flex; flex-direction: column; justify-content: space-between; padding: 3px 0; }
.chev { width: 3px; height: 3px; border-left: 1px solid #bbb; border-top: 1px solid #bbb; }
.chev.up { transform: rotate(45deg); margin-left: 2px; }
.chev.down { transform: rotate(225deg); margin-left: 2px; }
.hscroll { height: 10px; display: flex; justify-content: space-between; align-items: center; padding: 0 11px 0 3px; flex: none; }
.chev.lft { transform: rotate(-45deg); }
.chev.rgt { transform: rotate(135deg); }
.dlgfoot { display: flex; justify-content: flex-end; align-items: center; margin-top: 6px; padding-right: 2px; }
.dlgbtn { width: 42px; height: 13px; background: #e3e3e3; border: 1px solid #cfcfcf; color: #333; }
.viewmenu { width: 39px; display: flex; align-items: center; padding-left: 9px; color: #333; gap: 5px; }
.tri.small { border-left-width: 2px; border-right-width: 2px; border-top-width: 2.500px; }
```
FILE: app.js
```js
// Builds the finite-element mesh of the two pipes in the 3D view.
const NS = 'http://www.w3.org/2000/svg';
const scene = document.getElementById('scene');
function add(tag, attrs, text) {
  const el = document.createElementNS(NS, tag);
  Object.keys(attrs).forEach(k => el.setAttribute(k, attrs[k]));
  if (text) el.textContent = text;
  scene.appendChild(el);
  return el;
}
const pts = a => a.map(p => p[0].toFixed(1) + ',' + p[1].toFixed(1)).join(' ');

/* green pipe */
const L = { c: [530, 248], a: [3, -18.5], b: 13 };
const R = { c: [837, 285], a: [3.3, -24.5], b: 13 };
const rings = 29, bands = 8;
function gp(t, j) {
  const phi = Math.PI / 2 - Math.PI * j / bands;
  const lerp = (x, y) => x + (y - x) * t;
  return [
    lerp(L.c[0], R.c[0]) + lerp(L.a[0], R.a[0]) * Math.sin(phi) - 13 * Math.cos(phi),
    lerp(L.c[1], R.c[1]) + lerp(L.a[1], R.a[1]) * Math.sin(phi)
  ];
}
const greens = ['#009400', '#00c400', '#00e800', '#00ff00', '#00ff00', '#00ea00', '#00c800', '#009200'];
for (let j = 0; j < bands; j++) {
  add('polygon', { points: pts([gp(0, j), gp(1, j), gp(1, j + 1), gp(0, j + 1)]), fill: greens[j] });
}
const gline = { fill: 'none', stroke: '#006a00', 'stroke-width': 0.6, 'stroke-opacity': 0.85 };
for (let j = 0; j <= bands; j++) add('line', Object.assign({ x1: gp(0, j)[0], y1: gp(0, j)[1], x2: gp(1, j)[0], y2: gp(1, j)[1] }, gline));
for (let i = 0; i <= rings; i++) {
  const r = [];
  for (let j = 0; j <= bands; j++) r.push(gp(i / rings, j));
  add('polyline', Object.assign({ points: pts(r) }, gline));
}
add('ellipse', { cx: 837, cy: 285, rx: 13, ry: 24.7, transform: 'rotate(7.7 837 285)', fill: '#0ee00e' });

/* node labels and constraint markers */
[[838, 259], [846, 260], [830, 267], [848, 266], [828, 274], [852, 273], [828, 281], [853, 280],
 [828, 288], [853, 288], [828, 296], [852, 295], [828, 303], [848, 302], [830, 309], [842, 309]]
  .forEach(p => add('text', { x: p[0], y: p[1], fill: '#eef2ee', 'font-size': 5.8, 'font-family': 'Liberation Sans, sans-serif' }, '123456'));
[[522, 222], [519, 228]].forEach(p => add('text', { x: p[0], y: p[1], fill: '#eef2ee', 'font-size': 5.8, 'font-family': 'Liberation Sans, sans-serif' }, '123456'));
for (let k = 0; k < 20; k++) {
  const th = 2 * Math.PI * k / 20;
  const x = 837 + 13 * Math.cos(th) + 3.3 * Math.sin(th);
  const y = 285 + 24.7 * Math.sin(th);
  add('rect', { x: x - 1.2, y: y - 1.2, width: 2.4, height: 2.4, fill: '#e9a21a' });
}
[[519, 270], [523, 272], [528, 272]].forEach(p => add('rect', { x: p[0] - 1.2, y: p[1] - 1.2, width: 2.4, height: 2.4, fill: '#e9a21a' }));

/* red pipe: facet corners given in reference zoom units */
const z = p => [500 + p[0] / 3, 120 + p[1] / 3];
const endR = [[875, 8], [918, 32], [945, 75], [950, 125], [925, 172]].map(z);
const endL = [[105, 262], [175, 272], [215, 320], [215, 375], [150, 428]].map(z);
const reds = ['#8e0000', '#c00000', '#c40000', '#8e0000'];
for (let j = 0; j < 4; j++) add('polygon', { points: pts([endL[j], endR[j], endR[j + 1], endL[j + 1]]), fill: reds[j] });
const rline = { fill: 'none', stroke: '#6e0000', 'stroke-width': 0.5, 'stroke-opacity': 0.85 };
for (let j = 0; j < 5; j++) add('line', Object.assign({ x1: endL[j][0], y1: endL[j][1], x2: endR[j][0], y2: endR[j][1] }, rline));
for (let i = 1; i <= 15; i++) {
  const t = i / 16;
  add('polyline', Object.assign({ points: pts(endL.map((p, j) => [p[0] + (endR[j][0] - p[0]) * t, p[1] + (endR[j][1] - p[1]) * t])) }, rline));
}
const cap = [[105, 262], [78, 310], [78, 355], [110, 405], [150, 428], [215, 375], [215, 320], [175, 272]].map(z);
add('polygon', { points: pts(cap), fill: '#c20000', stroke: '#6e0000', 'stroke-width': 0.5 });
add('polyline', Object.assign({ points: pts([[78, 345], [130, 325], [175, 310], [215, 320]].map(z)) }, rline));
add('polyline', Object.assign({ points: pts([[126, 275], [130, 325], [130, 388]].map(z)) }, rline));
add('polyline', Object.assign({ points: pts([[175, 272], [175, 310], [178, 360]].map(z)) }, rline));
```
